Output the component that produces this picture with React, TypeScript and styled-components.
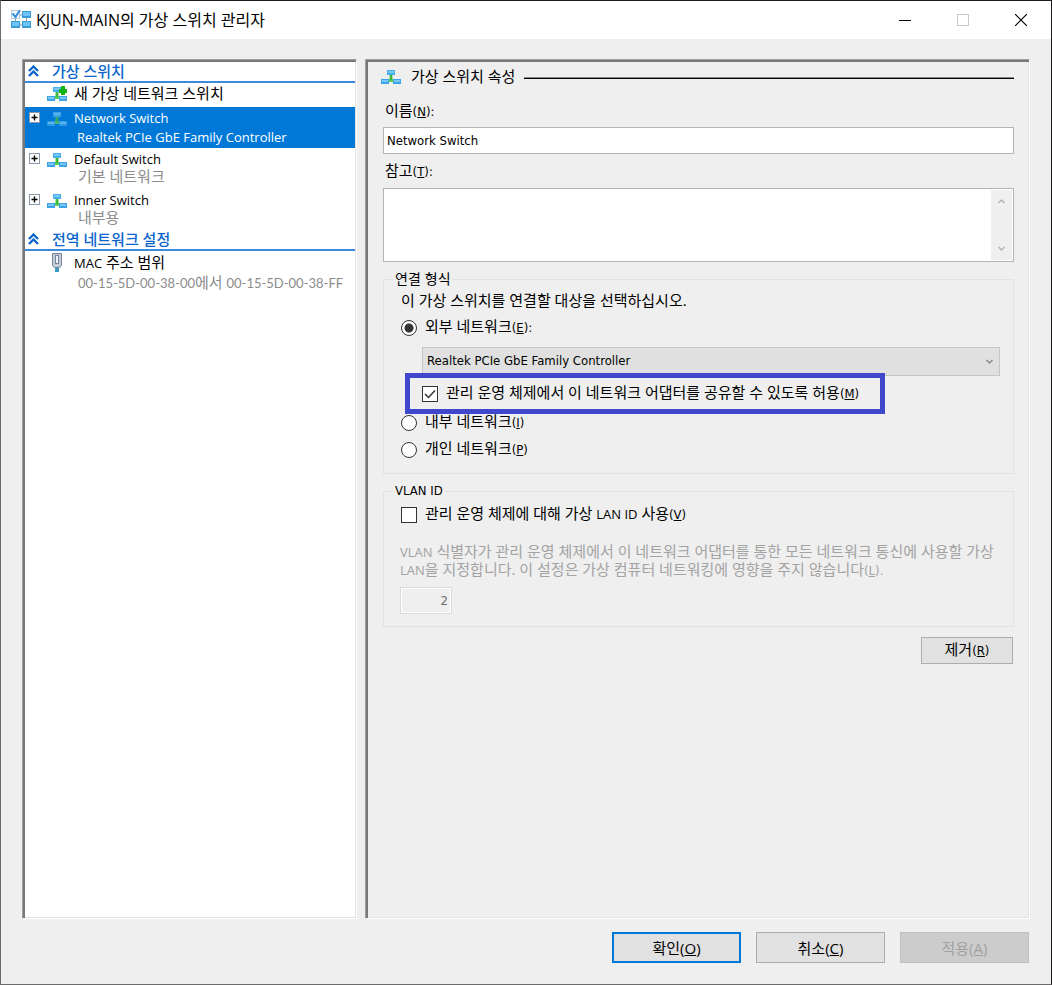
import React from 'react';
import styled, { createGlobalStyle, css } from 'styled-components';

const GlobalStyle = createGlobalStyle`
  *, *::before, *::after { box-sizing: border-box; }
  body { margin: 0; background: #efefef; }
  body, button, input, select, textarea {
    font-family: "Open Sans", "Noto Sans CJK KR", sans-serif;
    font-size: 15px;
    line-height: 18px;
    color: #000;
  }
`;

const condensed = '"DejaVu Sans Condensed", "Noto Sans CJK KR", sans-serif';

const Window = styled.div`
  min-height: 100vh;
  display: flex;
  flex-direction: column;
  background: #efefef;
  border: 1px solid #6b6b6b;
  border-top-color: #1e1b1e;
  border-right-color: #1e171b;
`;

const TitleBar = styled.header`
  height: 38px;
  display: flex;
  align-items: center;
  padding: 0 1px 1px 10px;
  background: #fff;
`;

const Title = styled.h1`
  flex: 1;
  margin: 0 0 0 5px;
  font-size: 16px;
  font-weight: 400;
  line-height: 20px;
`;

const CaptionButton = styled.button`
  width: 58px;
  height: 37px;
  padding: 0;
  display: flex;
  align-items: center;
  justify-content: center;
  border: 0;
  background: none;
`;

const Body = styled.div`
  flex: 1;
  display: grid;
  grid-template-columns: minmax(0, 335fr) minmax(0, 665fr);
  gap: 8px;
  padding: 20px 21px 0;
`;

const sunken = css`
  border: 1px solid;
  border-color: #a0a0a0 #fff #fff #a0a0a0;
  box-shadow: inset 2px 2px 0 #787878, inset -1px -1px 0 #e3e3e3;
`;

const Sidebar = styled.nav`
  ${sunken}
  padding: 2px 1px 1px 2px;
  background: #fff;
`;

const Details = styled.main`
  ${sunken}
  display: flex;
  flex-direction: column;
  padding: 6px 15px 12px 17px;
`;

const En = styled.span`
  font-size: 13px;
`;

const Mnemonic = styled.span<{ $large?: boolean }>`
  font-family: ${p => (p.$large ? 'inherit' : condensed)};
  font-size: ${p => (p.$large ? 15 : 13)}px;
`;

const GroupTitle = styled.h2`
  height: 21px;
  margin: 0;
  padding: 0 4px 1px 3px;
  display: flex;
  align-items: center;
  gap: 13px;
  border-bottom: 2px solid #3c8ade;
  color: #0a66cc;
  font-size: 15px;
  font-weight: 500;
  line-height: 18px;
`;

const TreeItem = styled.div<{ $selected?: boolean; $single?: boolean }>`
  min-height: ${p => (p.$single ? 24 : 41)}px;
  display: grid;
  grid-template-columns: 22px 20px 1fr;
  align-items: start;
  align-content: start;
  padding-top: ${p => (p.$single ? 1 : 2)}px;
  background: ${p => (p.$selected ? '#0078d7' : 'transparent')};
  color: ${p => (p.$selected ? '#fff' : '#000')};
`;

const Expander = styled.button`
  width: 11px;
  height: 11px;
  margin: 3px 0 0 4px;
  padding: 0;
  display: flex;
  border: 0;
  background: none;
`;

const IconCell = styled.span`
  grid-column: 2;
  height: 19px;
  display: flex;
  align-items: center;
  justify-content: center;
`;

const ItemName = styled.div<{ $latin?: boolean }>`
  grid-column: 3;
  padding-left: 7px;
  font-size: ${p => (p.$latin ? 13 : 15)}px;
  line-height: 19px;
`;

const ItemNote = styled.div<{ $latin?: boolean; $selected?: boolean }>`
  grid-column: 3;
  padding-left: ${p => (p.$latin ? 10 : 11)}px;
  font-size: ${p => (p.$latin ? 13 : 15)}px;
  line-height: ${p => (p.$latin ? 18 : 15)}px;
  color: ${p => (p.$selected ? '#fff' : '#8c8c8c')};
  white-space: nowrap;
`;

const AddressNote = styled(ItemNote)`
  line-height: 19px;
`;

const Address = styled.span`
  font-family: Lato, sans-serif;
  font-size: 13px;
`;

const SectionHeading = styled.div`
  height: 22px;
  display: flex;
  align-items: center;
  margin: 0 0 13px -2px;
`;

const SectionName = styled.h2`
  margin: 0 9px 2px 10px;
  font-size: 15px;
  font-weight: 400;
`;

const Rule = styled.hr`
  flex: 1;
  height: 2px;
  margin: 2px 0 0;
  border: 0;
  border-top: 1px solid #8a8a8a;
  background: #000;
`;

const FieldLabel = styled.label`
  height: 20px;
  padding-left: 2px;
  line-height: 18px;
`;

const NameInput = styled.input`
  height: 27px;
  margin: 6px 0 7px;
  padding: 0 3px;
  border: 1px solid #b4b4b4;
  border-radius: 0;
  background: #fff;
  font-family: ${condensed};
  font-size: 13px;
`;

const NotesBox = styled.div`
  height: 74px;
  display: flex;
  margin: 7px 0 9px;
  padding: 1px;
  border: 1px solid #b4b4b4;
  background: #fff;
`;

const NotesInput = styled.textarea`
  flex: 1;
  min-width: 0;
  padding: 2px;
  border: 0;
  outline: 0;
  resize: none;
  background: transparent;
`;

const ScrollTrack = styled.div`
  width: 21px;
  display: flex;
  flex-direction: column;
  align-items: center;
  justify-content: space-between;
  padding: 8px 0;
  background: #efefef;
`;

const Group = styled.fieldset<{ $bottom: number }>`
  min-width: 0;
  margin: 0 0 9px;
  padding: 0 13px ${p => p.$bottom}px 16px;
  border: 1px solid #e2e2e2;
`;

const Legend = styled.legend<{ $latin?: boolean }>`
  margin-left: -7px;
  padding: 0 2px;
  font-family: ${condensed};
  font-size: ${p => (p.$latin ? 13 : 14)}px;
  line-height: 16px;
`;

const Description = styled.p`
  margin: 0;
  line-height: 26px;
  padding-left: 1px;
`;

const OptionRow = styled.div<{ $height: number }>`
  height: ${p => p.$height}px;
  display: flex;
  align-items: center;
  gap: 8px;
  padding-left: 1px;
  & > label { padding-bottom: 2px; }
`;

const ShareRow = styled(OptionRow)`
  position: relative;
  width: 470px;
  max-width: 100%;
  margin: 2px 0 0 10px;
  padding-left: 12px;
  background: #efefef;
  outline: 5px solid #3f48cc;
`;

const Radio = styled.input.attrs({ type: 'radio' })`
  appearance: none;
  width: 16px;
  height: 16px;
  margin: 0;
  border: 1px solid #333;
  border-radius: 50%;
  background: #fff;
  &:checked { background: radial-gradient(circle, #333 0 4px, #fff 5px); }
`;

const CheckWrap = styled.span`
  display: grid;
  width: 16px;
  height: 16px;
  & > * { grid-area: 1 / 1; }
  & > svg { pointer-events: none; }
`;

const Check = styled.input.attrs({ type: 'checkbox' })`
  appearance: none;
  width: 16px;
  height: 16px;
  margin: 0;
  border: 1px solid #333;
  background: #fff;
  & + svg { visibility: hidden; }
  &:checked + svg { visibility: visible; }
`;

const SelectWrap = styled.div`
  display: grid;
  align-items: center;
  margin: 4px 0 0 22px;
  & > * { grid-area: 1 / 1; }
  & > svg { justify-self: end; margin-right: 6px; pointer-events: none; }
`;

const AdapterSelect = styled.select`
  appearance: none;
  width: 100%;
  height: 29px;
  padding: 0 24px 1px 4px;
  border: 1px solid #c6c6c6;
  border-radius: 0;
  background: #e0e0e0;
  font-family: ${condensed};
  font-size: 13px;
`;

const Hint = styled.label`
  display: block;
  margin: 12px 0 8px;
  color: #a3a3a3;
  line-height: 17px;
`;

const VlanInput = styled.input`
  display: block;
  width: 52px;
  height: 27px;
  padding: 0 3px;
  border: 1px solid #dadada;
  border-radius: 0;
  box-shadow: inset 0 0 0 1px #fff;
  background: #efefef;
  color: #6d6d6d;
  font-family: ${condensed};
  font-size: 13px;
  text-align: right;
`;

const PushButton = styled.button<{ $default?: boolean }>`
  width: 129px;
  height: 31px;
  padding: 0;
  border: ${p => (p.$default ? '2px solid #0078d7' : '1px solid #adadad')};
  background: #e1e1e1;
  &:disabled {
    border-color: #bfbfbf;
    background: #cccccc;
    color: #a0a0a0;
  }
`;

const RemoveButton = styled(PushButton)`
  align-self: flex-end;
  width: 92px;
  height: 27px;
  margin: 1px 1px 0 0;
  padding-bottom: 2px;
`;

const Footer = styled.footer`
  display: flex;
  justify-content: flex-end;
  gap: 15px;
  padding: 13px 22px 21px;
`;

const Key = ({ k, after = '', large }: { k: string; after?: string; large?: boolean }) => (
  <Mnemonic $large={large}>(<u>{k}</u>){after}</Mnemonic>
);

const SwitchIcon = ({ dim, add }: { dim?: boolean; add?: boolean }) => (
  <svg width="20" height="16" viewBox="0 0 20 16" opacity={dim ? 0.75 : 1} aria-hidden="true">
    <path d="M8.500 5h3v4.500L14 12v1H6v-1l2.500-2.500z" fill="#5ccc55" />
    <path d="M9.500 6h1.500v5h-1.500z" fill="#35b235" />
    <rect x="6" y="1" width="8" height="5" fill="#45b0ee" />
    <rect x="7" y="2" width="6" height="2" fill="#7cc6f4" />
    <rect x="0" y="10" width="8" height="5" fill="#3aa5e8" />
    <rect x="1" y="11" width="6" height="2" fill="#7cc6f4" />
    <rect x="12" y="10" width="8" height="5" fill="#3aa5e8" />
    <rect x="13" y="11" width="6" height="2" fill="#7cc6f4" />
    {add && <path d="M14 0h4v3h2v4h-2v2h-4V7h-2V3h2z" fill="#12b312" />}
  </svg>
);

const AppIcon = () => (
  <svg width="20" height="19" viewBox="0 0 20 19" aria-hidden="true">
    <path d="M9 5h2M15.500 8v3M9 15h2M4.500 9v2" stroke="#8496a4" strokeWidth="1" />
    <rect x="0.5" y="0.5" width="8" height="8" fill="#f0f7fd" stroke="#b4cde2" />
    <path d="M1.500 3.500l3 3.500L9 0" fill="none" stroke="#3b8fd6" strokeWidth="2" />
    <rect x="11" y="1" width="9" height="7" fill="#3a9bd6" />
    <rect x="12" y="2" width="7" height="4" fill="#6cc5f5" />
    <rect x="0" y="11" width="9" height="7" fill="#3a9bd6" />
    <rect x="1" y="12" width="7" height="4" fill="#6cc5f5" />
    <rect x="11" y="11" width="9" height="7" fill="#3a9bd6" />
    <rect x="12" y="12" width="7" height="4" fill="#6cc5f5" />
  </svg>
);

const PlugIcon = () => (
  <svg width="10" height="19" viewBox="0 0 10 19" aria-hidden="true">
    <rect x="3" y="14" width="4" height="5" fill="#3d9bc6" />
    <path d="M.5.5h9v12l-2 2h-5l-2-2z" fill="#c3ccd8" stroke="#76849a" />
    <rect x="3.500" y="2.500" width="3" height="8" fill="#eef1f6" stroke="#76849a" />
  </svg>
);

const CollapseIcon = () => (
  <svg width="11" height="12" viewBox="0 0 11 12" aria-hidden="true">
    <path d="M1 6l4.500-4.500L10 6M1 11l4.500-4.500L10 11" fill="none" stroke="#0a66cc" strokeWidth="2.300" />
  </svg>
);

const PlusBox = () => (
  <svg width="11" height="11" viewBox="0 0 11 11" aria-hidden="true">
    <rect x=".5" y=".5" width="10" height="10" fill="#fff" stroke="#8a97a8" />
    <path d="M2.500 5.500h6M5.500 2.500v6" stroke="#000" strokeWidth="1.400" />
  </svg>
);

const Chevron = ({ up, color }: { up?: boolean; color: string }) => (
  <svg width="9" height="6" viewBox="0 0 9 6" aria-hidden="true">
    <path d={up ? 'M1.500 5l3-3 3 3' : 'M1.500 1l3 3 3-3'} fill="none" stroke={color} strokeWidth="1.500" />
  </svg>
);

const switches = [
  { name: 'Network Switch', note: 'Realtek PCIe GbE Family Controller', latin: true, selected: true },
  { name: 'Default Switch', note: '기본 네트워크' },
  { name: 'Inner Switch', note: '내부용' },
];

export default function App() {
  return (
    <Window>
      <GlobalStyle />
      <TitleBar>
        <AppIcon />
        <Title>KJUN-MAIN의 가상 스위치 관리자</Title>
        <CaptionButton aria-label="최소화">
          <svg width="12" height="12"><path d="M0 6.500h12" stroke="#000" /></svg>
        </CaptionButton>
        <CaptionButton aria-label="최대화" disabled>
          <svg width="12" height="12"><rect x=".5" y=".5" width="11" height="11" fill="none" stroke="#c8c8c8" /></svg>
        </CaptionButton>
        <CaptionButton aria-label="닫기">
          <svg width="12" height="12"><path d="M0 0l12 12M12 0L0 12" stroke="#000" strokeWidth="1.200" /></svg>
        </CaptionButton>
      </TitleBar>

      <Body>
        <Sidebar>
          <GroupTitle><CollapseIcon />가상 스위치</GroupTitle>
          <TreeItem $single>
            <IconCell><SwitchIcon add /></IconCell>
            <ItemName>새 가상 네트워크 스위치</ItemName>
          </TreeItem>
          {switches.map(s => (
            <TreeItem key={s.name} $selected={s.selected}>
              <Expander aria-label={`${s.name} 확장`}><PlusBox /></Expander>
              <IconCell><SwitchIcon dim={s.selected} /></IconCell>
              <ItemName $latin>{s.name}</ItemName>
              <ItemNote $latin={s.latin} $selected={s.selected}>{s.note}</ItemNote>
            </TreeItem>
          ))}
          <GroupTitle><CollapseIcon />전역 네트워크 설정</GroupTitle>
          <TreeItem>
            <IconCell><PlugIcon /></IconCell>
            <ItemName><En>MAC</En> 주소 범위</ItemName>
            <AddressNote>
              <Address>00-15-5D-00-38-00</Address>에서 <Address>00-15-5D-00-38-FF</Address>
            </AddressNote>
          </TreeItem>
        </Sidebar>

        <Details>
          <SectionHeading>
            <SwitchIcon />
            <SectionName>가상 스위치 속성</SectionName>
            <Rule />
          </SectionHeading>
          <FieldLabel htmlFor="name">이름<Key k="N" after=":" /></FieldLabel>
          <NameInput id="name" defaultValue="Network Switch" />
          <FieldLabel htmlFor="notes">참고<Key k="T" after=":" /></FieldLabel>
          <NotesBox>
            <NotesInput id="notes" />
            <ScrollTrack>
              <Chevron up color="#b4b4b4" />
              <Chevron color="#b4b4b4" />
            </ScrollTrack>
          </NotesBox>

          <Group $bottom={10}>
            <Legend>연결 형식</Legend>
            <Description>이 가상 스위치를 연결할 대상을 선택하십시오.</Description>
            <OptionRow $height={30}>
              <Radio id="external" name="kind" defaultChecked />
              <label htmlFor="external">외부 네트워크<Key k="E" after=":" /></label>
            </OptionRow>
            <SelectWrap>
              <AdapterSelect aria-label="외부 네트워크 어댑터">
                <option>Realtek PCIe GbE Family Controller</option>
              </AdapterSelect>
              <Chevron color="#8a8a8a" />
            </SelectWrap>
            <ShareRow $height={31}>
              <CheckWrap>
                <Check id="share" defaultChecked />
                <svg width="16" height="16"><path d="M3 8l3.500 3.500L13 4.500" fill="none" stroke="#333" strokeWidth="1.500" /></svg>
              </CheckWrap>
              <label htmlFor="share">관리 운영 체제에서 이 네트워크 어댑터를 공유할 수 있도록 허용<Key k="M" /></label>
            </ShareRow>
            <OptionRow $height={27}>
              <Radio id="internal" name="kind" />
              <label htmlFor="internal">내부 네트워크<Key k="I" /></label>
            </OptionRow>
            <OptionRow $height={27}>
              <Radio id="private" name="kind" />
              <label htmlFor="private">개인 네트워크<Key k="P" /></label>
            </OptionRow>
          </Group>

          <Group $bottom={12}>
            <Legend $latin>VLAN ID</Legend>
            <OptionRow $height={32}>
              <CheckWrap>
                <Check id="vlan" />
                <svg width="16" height="16"><path d="M3 8l3.500 3.500L13 4.500" fill="none" stroke="#333" strokeWidth="1.500" /></svg>
              </CheckWrap>
              <label htmlFor="vlan">관리 운영 체제에 대해 가상 <En>LAN ID</En> 사용<Key k="V" /></label>
            </OptionRow>
            <Hint htmlFor="vlanId">
              <En>VLAN</En> 식별자가 관리 운영 체제에서 이 네트워크 어댑터를 통한 모든 네트워크 통신에 사용할 가상 <En>LAN</En>을 지정합니다. 이 설정은 가상 컴퓨터 네트워킹에 영향을 주지 않습니다<Key k="L" after="." />
            </Hint>
            <VlanInput id="vlanId" defaultValue="2" disabled />
          </Group>
          <RemoveButton>제거<Key k="R" /></RemoveButton>
        </Details>
      </Body>

      <Footer>
        <PushButton $default>확인<Key k="O" large /></PushButton>
        <PushButton>취소<Key k="C" large /></PushButton>
        <PushButton disabled>적용<Key k="A" large /></PushButton>
      </Footer>
    </Window>
  );
}
